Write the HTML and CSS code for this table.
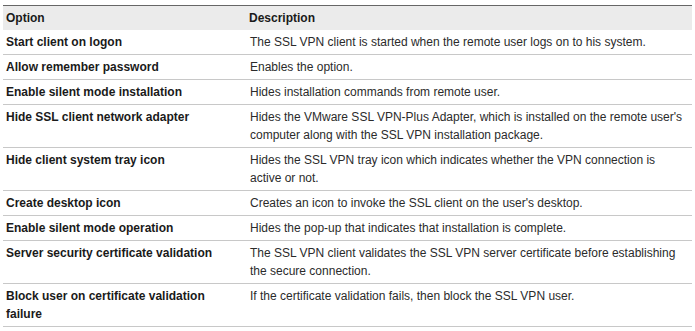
FILE: index.html
```html
<!DOCTYPE html>
<html lang="en">
<head>
    <meta charset="UTF-8">
    <title>SSL VPN client options</title>
    <link rel="stylesheet" href="styles.css">
</head>
<body>
    <table class="options">
        <thead>
            <tr>
                <th class="col-option">Option</th>
                <th>Description</th>
            </tr>
        </thead>
        <tbody>
            <tr>
                <td class="name">Start client on logon</td>
                <td>The SSL VPN client is started when the remote user logs on to his system.</td>
            </tr>
            <tr>
                <td class="name">Allow remember password</td>
                <td>Enables the option.</td>
            </tr>
            <tr>
                <td class="name">Enable silent mode installation</td>
                <td>Hides installation commands from remote user.</td>
            </tr>
            <tr>
                <td class="name">Hide SSL client network adapter</td>
                <td>Hides the VMware SSL VPN-Plus Adapter, which is installed on the remote user's computer along with the SSL VPN installation package.</td>
            </tr>
            <tr>
                <td class="name">Hide client system tray icon</td>
                <td>Hides the SSL VPN tray icon which indicates whether the VPN connection is active or not.</td>
            </tr>
            <tr>
                <td class="name">Create desktop icon</td>
                <td>Creates an icon to invoke the SSL client on the user's desktop.</td>
            </tr>
            <tr>
                <td class="name">Enable silent mode operation</td>
                <td>Hides the pop-up that indicates that installation is complete.</td>
            </tr>
            <tr>
                <td class="name">Server security certificate validation</td>
                <td>The SSL VPN client validates the SSL VPN server certificate before establishing the secure connection.</td>
            </tr>
            <tr>
                <td class="name">Block user on certificate validation failure</td>
                <td>If the certificate validation fails, then block the SSL VPN user.</td>
            </tr>
        </tbody>
    </table>
</body>
</html>
```

FILE: styles.css
```css
body {
    margin: 0;
    padding: 5px 3px 0 3px;
    font-family: "Liberation Sans", Arial, sans-serif;
    font-size: 12px;
    color: #2b2b2b;
    background: #fff;
}

.options {
    width: 689px;
    border-collapse: collapse;
    border-top: 1px solid #666;
    line-height: 18px;
}

.options th {
    background: #ebebeb;
    text-align: left;
    font-weight: bold;
    color: #1a1a1a;
    padding: 3px 3px 3px 3px;
}

.options .col-option {
    width: 237px;
}

.options td {
    vertical-align: top;
    padding: 3px 3px 3px 4px;
    border-bottom: 1px solid #c8c8c8;
}

.options td.name {
    font-weight: bold;
    color: #1a1a1a;
    padding-left: 3px;
}
```
